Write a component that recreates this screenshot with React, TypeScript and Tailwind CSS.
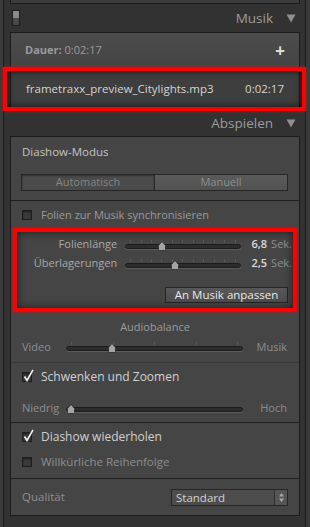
import type { FC, ReactNode } from "react";

const Track: FC<{ pos: number; ticks: number }> = ({ pos, ticks }) => {
  return (
    <div className="relative flex-1 h-[14px]">
      <div className="absolute left-0 right-0 top-[2px] flex justify-between px-[5px]">
        {Array.from({ length: ticks }).map((_, i) => (
          <div key={i} className="w-px h-[3px] bg-[#595959]" />
        ))}
      </div>
      <div className="absolute left-0 right-0 top-[6px] h-[5px] rounded-full bg-[#2c2c2c] border border-[#1c1c1c] shadow-[0_1px_0_#5c5c5c]" />
      <svg
        className="absolute top-[3px]"
        style={{ left: `calc(${pos}% - 5px)` }}
        width="10"
        height="10"
        viewBox="0 0 10 10"
      >
        <path d="M5 0.5 L8.5 4.5 L8.5 8.5 Q8.5 9.5 7.5 9.5 L2.5 9.5 Q1.5 9.5 1.5 8.5 L1.5 4.5 Z" fill="#a4a4a4" stroke="#2a2a2a" strokeWidth="0.8" />
      </svg>
    </div>
  );
};

const Check: FC<{ on?: boolean }> = ({ on }) => {
  return (
    <div className="relative w-[10px] h-[10px] border border-[#1f1f1f] bg-[#3a3a3a] shadow-[inset_0_1px_2px_rgba(0,0,0,0.5)]">
      {on && (
        <svg className="absolute -top-[4px] left-[0px]" width="11" height="13" viewBox="0 0 11 13">
          <path d="M1.5 7.5 L4 11.5 L10 0.8" fill="none" stroke="#f2f2f2" strokeWidth="1.6" />
        </svg>
      )}
    </div>
  );
};

const Header: FC<{ title: string; left?: ReactNode; h: string }> = ({ title, left, h }) => {
  return (
    <div className={`flex items-center justify-between pl-[2px] pr-[4px] ${h}`}>
      <div>{left}</div>
      <div className="flex items-center gap-[13px]">
        <span className="text-[13.5px] text-[#9c9c9c]">{title}</span>
        <svg width="10" height="9" viewBox="0 0 10 9">
          <path d="M0.5 0.5 L9.5 0.5 L5 8.5 Z" fill="#8e8e8e" />
        </svg>
      </div>
    </div>
  );
};

export default function App() {
  return (
    <div className="relative w-[310px] h-[527px] overflow-hidden bg-[#3a3a3a] pl-[3px] pr-[4px] font-['Open_Sans',sans-serif]">
      <div className="h-full border-x border-[#1c1c1c] bg-[#323232] pl-[6px] pr-[5px] flex flex-col">
        <div className="h-[4px] border-x border-b border-[#1c1c1c] bg-[#3c3c3c]" />

        <Header
          h="h-[28px]"
          title="Musik"
          left={
            <div className="w-[8px] h-[16px] border border-[#1c1c1c] flex flex-col">
              <div className="h-[7px] bg-[#8a8a8a]" />
              <div className="flex-1 bg-[#4a4a4a]" />
            </div>
          }
        />

        <div className="border border-[#1c1c1c] bg-[#474747]">
          <div className="h-[35px] flex items-center justify-between pl-[14px] pr-[14px] bg-gradient-to-b from-[#4c4c4c] to-[#444444]">
            <span className="text-[11px] text-[#9a9a9a]">
              <b className="font-bold">Dauer:</b> 0:02:17
            </span>
            <span className="text-[17px] font-bold text-[#dedede] leading-none">+</span>
          </div>
          <div className="h-[42px] flex items-center justify-between pl-[15px] pr-[15px] bg-[#3e3e3e] text-[11.5px] text-[#d4d4d4]">
            <span>frametraxx_preview_Citylights.mp3</span>
            <span>0:02:17</span>
          </div>
        </div>

        <Header h="h-[25px]" title="Abspielen" />

        <div className="border border-[#1c1c1c] bg-[#454545] flex flex-col">
          <div className="h-[30px] flex items-center pl-[11px] text-[11.5px] text-[#c4c4c4]">Diashow-Modus</div>
          <div className="h-[33px] pt-[7px] pl-[10px] pr-[11px]">
            <div className="flex h-[17px] border border-[#262626] text-[11px]">
              <div className="flex-1 flex items-center justify-center bg-[#4b4b4b] text-[#858585] border-r border-[#262626] shadow-[inset_0_1px_2px_rgba(0,0,0,0.35)]">
                Automatisch
              </div>
              <div className="flex-1 flex items-center justify-center bg-gradient-to-b from-[#5a5a5a] to-[#525252] text-[#8e8e8e]">
                Manuell
              </div>
            </div>
          </div>

          <div className="h-px bg-[#1f1f1f]" />

          <div className="h-[28px] flex items-center gap-[9px] pl-[11px] text-[11px] text-[#9a9a9a]">
            <Check />
            <span>Folien zur Musik synchronisieren</span>
          </div>

          <div className="pt-[6px] pl-[10px] pr-[7px]">
            <div className="h-[19px] flex items-center text-[11px]">
              <span className="w-[100px] text-right text-[#a8a8a8]">Folienlänge</span>
              <div className="ml-[8px] w-[120px] flex">
                <Track pos={32} ticks={11} />
              </div>
              <span className="ml-[11px] text-[#dcdcdc] font-semibold">6,8</span>
              <span className="ml-[4px] text-[#8e8e8e]">Sek.</span>
            </div>
            <div className="h-[19px] flex items-center text-[11px]">
              <span className="w-[100px] text-right text-[#a8a8a8]">Überlagerungen</span>
              <div className="ml-[8px] w-[120px] flex">
                <Track pos={43} ticks={11} />
              </div>
              <span className="ml-[11px] text-[#dcdcdc] font-semibold">2,5</span>
              <span className="ml-[4px] text-[#8e8e8e]">Sek.</span>
            </div>
          </div>
          <div className="flex justify-end pr-[11px] pt-[14px]">
            <div className="w-[123px] h-[16px] flex items-center justify-center border border-[#262626] bg-gradient-to-b from-[#585858] to-[#4c4c4c] text-[11.5px] text-[#e8e8e8]">
              An Musik anpassen
            </div>
          </div>

          <div className="h-[35px] pt-[14px] text-center text-[11px] text-[#9a9a9a] leading-[20px]">Audiobalance</div>
          <div className="h-[18px] flex items-center pl-[11px] pr-[12px] text-[11px] text-[#8e8e8e]">
            <span className="w-[44px]">Video</span>
            <Track pos={26} ticks={5} />
            <span className="w-[44px] text-right">Musik</span>
          </div>
          <div className="h-[6px]" />
          <div className="h-px bg-[#3a3a3a]" />

          <div className="h-[28px] flex items-center gap-[9px] pl-[11px] text-[12px] text-[#d0d0d0]">
            <Check on />
            <span>Schwenken und Zoomen</span>
          </div>
          <div className="h-[7px]" />
          <div className="h-[20px] flex items-center pl-[11px] pr-[12px] text-[11px] text-[#8e8e8e]">
            <span className="w-[44px]">Niedrig</span>
            <Track pos={3} ticks={0} />
            <span className="w-[44px] text-right">Hoch</span>
          </div>
          <div className="h-[4px]" />
          <div className="h-px bg-[#1f1f1f]" />

          <div className="h-[27px] flex items-center gap-[9px] pl-[11px] text-[12px] text-[#d0d0d0]">
            <Check on />
            <span>Diashow wiederholen</span>
          </div>
          <div className="h-[24px] flex items-center gap-[9px] pl-[11px] text-[11.5px] text-[#8e8e8e]">
            <Check />
            <span>Willkürliche Reihenfolge</span>
          </div>
          <div className="h-[4px]" />
          <div className="h-px bg-[#1f1f1f]" />

          <div className="h-[36px] flex items-center justify-between pl-[11px] pr-[11px]">
            <span className="text-[11.5px] text-[#8e8e8e]">Qualität</span>
            <div className="w-[117px] h-[17px] flex border border-[#262626] bg-[#4d4d4d]">
              <span className="flex-1 pl-[4px] text-[11.5px] leading-[15px] text-[#d2d2d2]">Standard</span>
              <div className="w-[13px] border-l border-[#2e2e2e] bg-[#555555] flex flex-col items-center justify-center">
                <svg width="7" height="11" viewBox="0 0 7 11">
                  <path d="M3.5 1 L6 4.5 L1 4.5 Z" fill="#a8a8a8" />
                  <path d="M3.5 10 L6 6.5 L1 6.5 Z" fill="#a8a8a8" />
                </svg>
              </div>
            </div>
          </div>
        </div>
      </div>

      <div className="absolute left-[3px] top-[67px] w-[303px] h-[44px] border-[4px] border-[#ff0000] shadow-[0_0_3px_rgba(255,0,0,0.7),inset_0_0_7px_rgba(0,0,0,0.7)]" />
      <div className="absolute left-[13px] top-[228px] w-[284px] h-[84px] border-[4px] border-[#ff0000] shadow-[0_0_3px_rgba(255,0,0,0.7),inset_0_0_9px_rgba(0,0,0,0.6)]" />
    </div>
  );
}
